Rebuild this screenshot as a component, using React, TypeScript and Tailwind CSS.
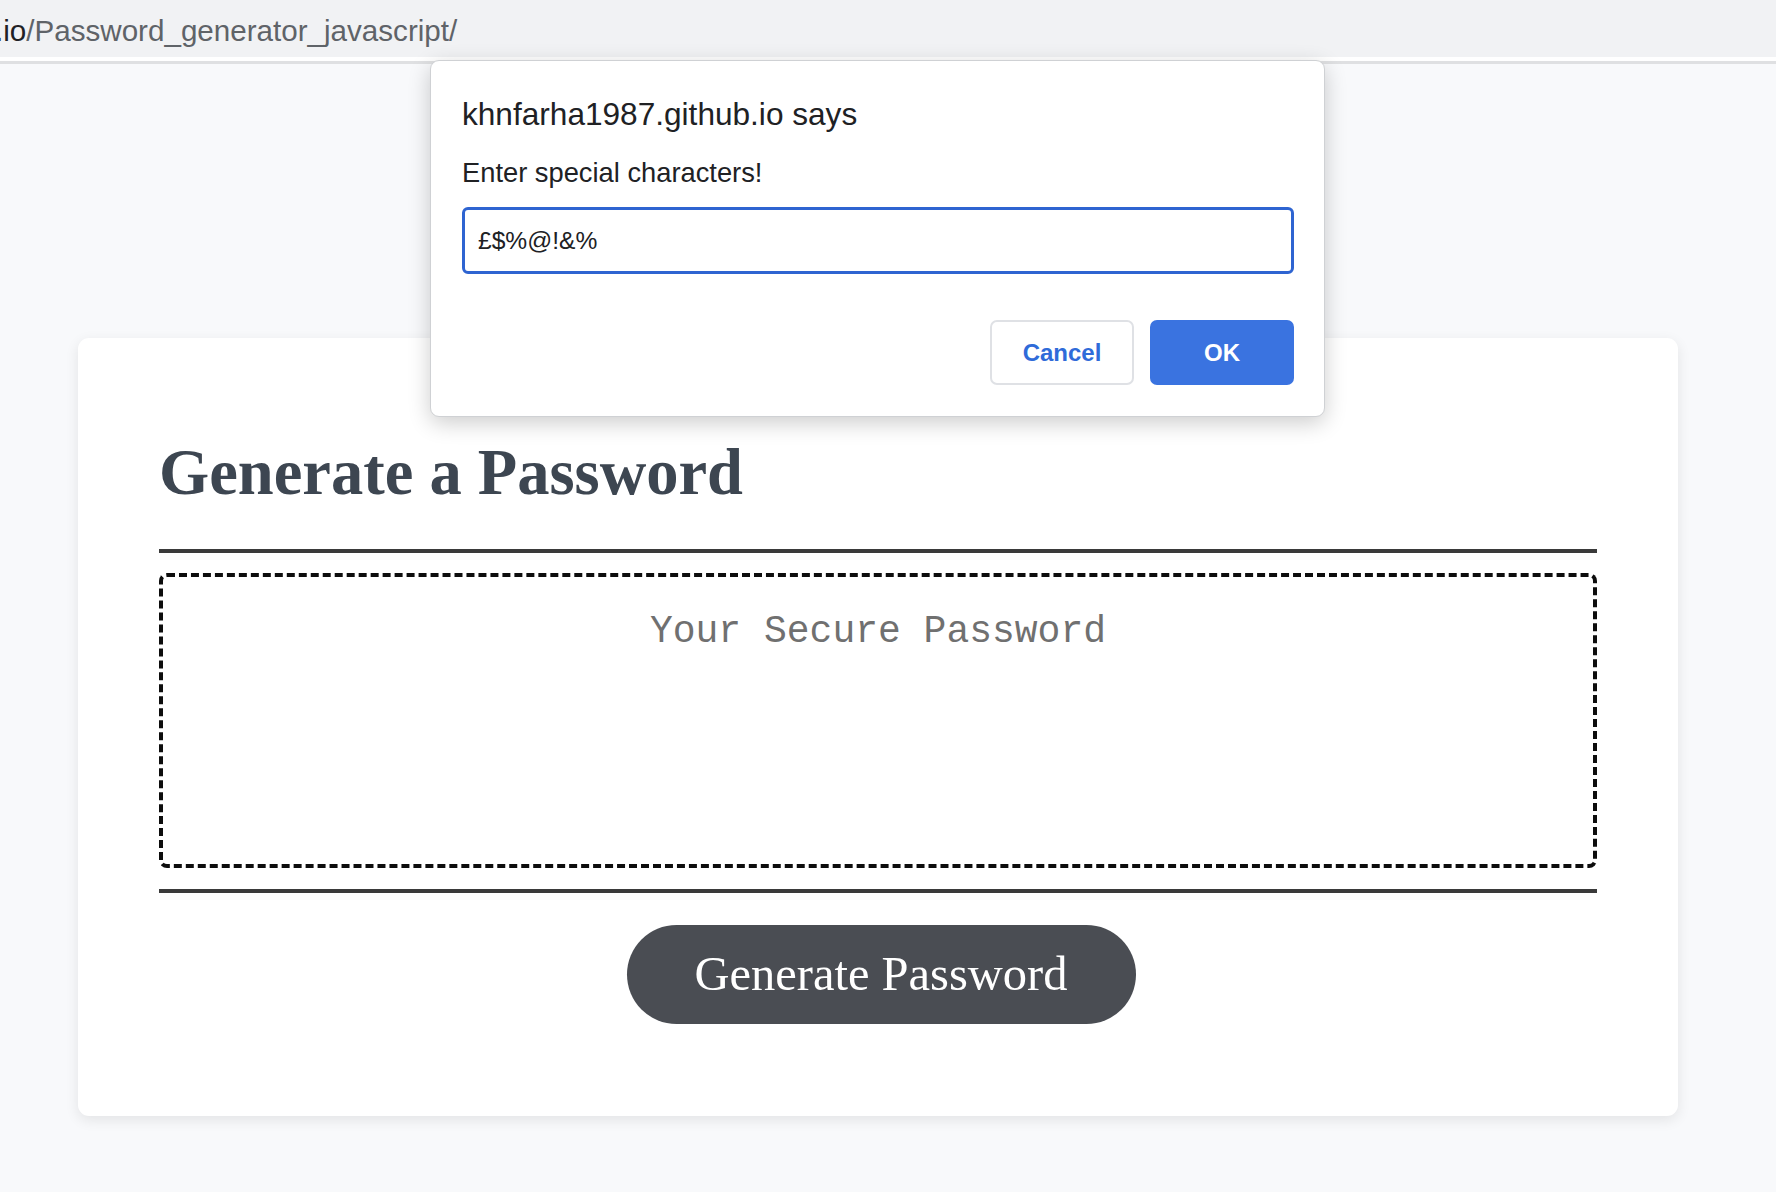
import { useState } from 'react';

const PromptDialog = ({ value, onChange }: { value: string; onChange: (v: string) => void }) => (
  <div className="absolute left-[430px] top-[60px] z-10 flex w-[895px] flex-col rounded-[9px] border border-[#cfd1d4] bg-white pl-[31px] pr-[30px] pt-[35px] pb-[31px] font-['Liberation_Sans',Arial,sans-serif] text-[#202124] shadow-[0_6px_22px_rgba(0,0,0,0.2)]">
    <p className="text-[31.6px] leading-[36px]">khnfarha1987.github.io says</p>
    <p className="mt-[25px] text-[27.3px] leading-[32px]">Enter special characters!</p>
    <input
      value={value}
      onChange={(e) => onChange(e.target.value)}
      className="mt-[18px] h-[67px] w-full rounded-[6px] border-[3px] border-[#2e64d1] px-[13px] text-[24.6px] text-[#202124] outline-none"
    />
    <div className="mt-[46px] flex justify-end gap-x-4">
      <button className="h-[65px] w-[144px] rounded-[7px] border-2 border-[#dfe1e5] bg-white text-[24px] font-bold text-[#2f6bd9]">
        Cancel
      </button>
      <button className="h-[65px] w-[144px] rounded-[7px] bg-[#3a73e0] text-[24px] font-bold text-white">OK</button>
    </div>
  </div>
);

export default function App() {
  const [chars, setChars] = useState('£$%@!&%');
  const [password, setPassword] = useState('');

  return (
    <div className="relative flex min-h-[1192px] w-[1776px] flex-col overflow-hidden bg-[#f8f9fb]">
      <div className="flex h-[57px] items-center bg-[#f1f2f4] pt-1 font-['Liberation_Sans',Arial,sans-serif] text-[29.6px] leading-[34px]">
        <span className="-ml-[5px] text-[#202124]">.io</span>
        <span className="text-[#5f6368]">/Password_generator_javascript/</span>
      </div>
      <div className="h-[4px] bg-white" />
      <div className="h-[3px] bg-[#dfe0e2]" />

      <PromptDialog value={chars} onChange={setChars} />

      <div className="ml-[78px] mt-[274px] flex w-[1600px] flex-col rounded-[11px] bg-white px-[81px] pt-[103px] pb-[92px] shadow-[0_4px_14px_rgba(0,0,0,0.09)]">
        <h1 className="h-[64px] font-['Liberation_Serif',Georgia,serif] text-[64.5px] font-bold leading-none text-[#3d4651]">
          Generate a Password
        </h1>
        <div className="mt-[44px] h-[4px] bg-[#3a3a3a]" />
        <textarea
          readOnly
          value={password}
          placeholder="Your Secure Password"
          className="mt-[20px] h-[295px] w-full resize-none rounded-[8px] border-[4px] border-dashed border-[#0d0d0d] pt-[33px] text-center font-['Liberation_Mono','Courier_New',monospace] text-[38px] leading-[44px] text-[#444] outline-none placeholder:text-[#707070]"
        />
        <div className="mt-[21px] h-[4px] bg-[#3a3a3a]" />
        <div className="mt-[32px] flex justify-center">
          <button
            onClick={() => setPassword(chars.repeat(2))}
            className="ml-[6px] h-[99px] w-[509px] rounded-full bg-[#4a4d53] font-['Liberation_Serif',Georgia,serif] text-[48.5px] text-white"
          >
            Generate Password
          </button>
        </div>
      </div>
    </div>
  );
}
